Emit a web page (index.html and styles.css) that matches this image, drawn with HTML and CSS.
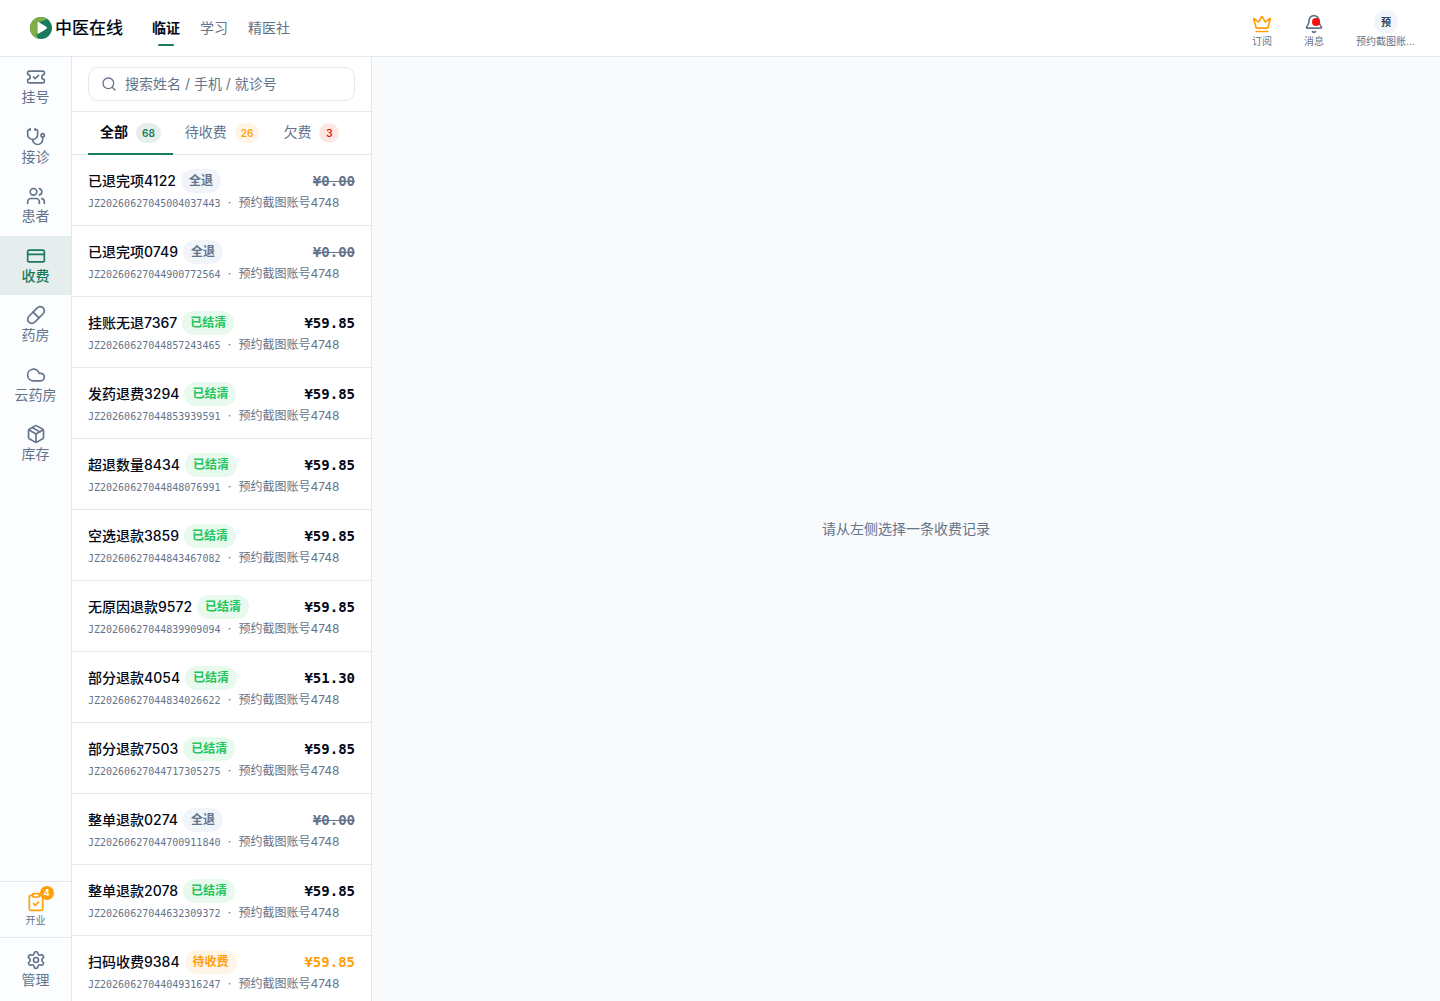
FILE: index.html
```html
<!DOCTYPE html>
<html lang="zh-CN">
<head>
<meta charset="utf-8">
<meta name="viewport" content="width=device-width, initial-scale=1">
<title>收费 - 中医在线</title>
<link rel="stylesheet" href="styles.css">
</head>
<body>
<div class="app">
  <header class="topbar">
    <a class="brand" href="#">
      <svg class="brand-mark" viewBox="0 0 22 22" aria-hidden="true">
        <circle cx="11" cy="11" r="11" fill="#1a7a5e"/>
        <path d="M17 1.800A11 11 0 1 0 8 21.600C6.500 19 6.500 17 7.500 14V7C10 3.500 14.500 4.500 17 1.800Z" fill="#7fae45"/>
        <path d="M7.500 6C7.500 5 8.400 4.900 9.300 5.400L16.300 9.800C17.200 10.400 17.200 11.200 16.300 11.800C13.500 13.800 11 15.500 7.500 17.200Z" fill="#fff"/>
      </svg>
      <span>中医在线</span>
    </a>
    <nav class="topnav">
      <a class="topnav-link is-active" href="#">临证</a>
      <a class="topnav-link" href="#">学习</a>
      <a class="topnav-link" href="#">精医社</a>
    </nav>
    <div class="tools">
      <button class="tool" type="button">
        <svg class="icon icon-amber" viewBox="0 0 24 24"><path d="M11.562 3.266a.5.5 0 0 1 .876 0L15.390 8.870a1 1 0 0 0 1.516.294L21.183 5.500a.5.5 0 0 1 .798.519l-2.834 10.246a1 1 0 0 1-.956.734H5.810a1 1 0 0 1-.957-.734L2.020 6.020a.5.5 0 0 1 .798-.519l4.276 3.664a1 1 0 0 0 1.516-.294z"/><path d="M5 21h14"/></svg>
        <span>订阅</span>
      </button>
      <button class="tool" type="button">
        <span class="icon-wrap">
          <svg class="icon" viewBox="0 0 24 24"><path d="M10.268 21a2 2 0 0 0 3.464 0"/><path d="M3.262 15.326A1 1 0 0 0 4 17h16a1 1 0 0 0 .740-1.673C19.410 13.956 18 12.499 18 8A6 6 0 0 0 6 8c0 4.499-1.411 5.956-2.738 7.326"/></svg>
          <i class="dot"></i>
        </span>
        <span>消息</span>
      </button>
      <button class="tool tool-user" type="button">
        <span class="avatar">预</span>
        <span class="user-name">预约截图账号4748</span>
      </button>
    </div>
  </header>

  <div class="body">
    <aside class="sidebar">
      <nav class="side-main">
        <a class="side-link" href="#"><svg class="icon" viewBox="0 0 24 24"><path d="M2 9a3 3 0 1 1 0 6v2a2 2 0 0 0 2 2h16a2 2 0 0 0 2-2v-2a3 3 0 1 1 0-6V7a2 2 0 0 0-2-2H4a2 2 0 0 0-2 2Z"/><path d="m9 12 2 2 4-4"/></svg><span>挂号</span></a>
        <a class="side-link" href="#"><svg class="icon" viewBox="0 0 24 24"><path d="M11 2v2"/><path d="M5 2v2"/><path d="M5 3H4a2 2 0 0 0-2 2v4a6 6 0 0 0 12 0V5a2 2 0 0 0-2-2h-1"/><path d="M8 15a6 6 0 0 0 12 0v-3"/><circle cx="20" cy="10" r="2"/></svg><span>接诊</span></a>
        <a class="side-link" href="#"><svg class="icon" viewBox="0 0 24 24"><path d="M16 21v-2a4 4 0 0 0-4-4H6a4 4 0 0 0-4 4v2"/><circle cx="9" cy="7" r="4"/><path d="M22 21v-2a4 4 0 0 0-3-3.870"/><path d="M16 3.130a4 4 0 0 1 0 7.750"/></svg><span>患者</span></a>
        <a class="side-link is-active" href="#" aria-current="page"><svg class="icon" viewBox="0 0 24 24"><rect x="2" y="5" width="20" height="14" rx="2"/><path d="M2 10h20"/></svg><span>收费</span></a>
        <a class="side-link" href="#"><svg class="icon" viewBox="0 0 24 24"><path d="m10.500 20.500 10-10a4.950 4.950 0 1 0-7-7l-10 10a4.950 4.950 0 1 0 7 7Z"/><path d="m8.500 8.500 7 7"/></svg><span>药房</span></a>
        <a class="side-link" href="#"><svg class="icon" viewBox="0 0 24 24"><path d="M17.500 19H9a7 7 0 1 1 6.710-9h1.790a4.500 4.500 0 1 1 0 9Z"/></svg><span>云药房</span></a>
        <a class="side-link" href="#"><svg class="icon" viewBox="0 0 24 24"><path d="M11 21.730a2 2 0 0 0 2 0l7-4A2 2 0 0 0 21 16V8a2 2 0 0 0-1-1.730l-7-4a2 2 0 0 0-2 0l-7 4A2 2 0 0 0 3 8v8a2 2 0 0 0 1 1.730z"/><path d="M12 22V12"/><path d="M3.290 7 12 12l8.710-5"/><path d="m7.500 4.270 9 5.150"/></svg><span>库存</span></a>
      </nav>
      <div class="side-setup">
        <a class="setup-link" href="#">
          <span class="icon-wrap">
            <svg class="icon icon-amber" viewBox="0 0 24 24"><rect x="8" y="2" width="8" height="4" rx="1"/><path d="M16 4h2a2 2 0 0 1 2 2v14a2 2 0 0 1-2 2H6a2 2 0 0 1-2-2V6a2 2 0 0 1 2-2h2"/><path d="m9 14 2 2 4-4"/></svg>
            <span class="setup-count">4</span>
          </span>
          <span>开业</span>
        </a>
      </div>
      <div class="side-admin">
        <a class="side-link" href="#"><svg class="icon" viewBox="0 0 24 24"><path d="M9.671 4.136a2.340 2.340 0 0 1 4.659 0 2.340 2.340 0 0 0 3.319 1.915 2.340 2.340 0 0 1 2.330 4.033 2.340 2.340 0 0 0 0 3.831 2.340 2.340 0 0 1-2.330 4.033 2.340 2.340 0 0 0-3.319 1.915 2.340 2.340 0 0 1-4.659 0 2.340 2.340 0 0 0-3.320-1.915 2.340 2.340 0 0 1-2.330-4.033 2.340 2.340 0 0 0 0-3.831A2.340 2.340 0 0 1 6.350 6.051a2.340 2.340 0 0 0 3.319-1.915"/><circle cx="12" cy="12" r="3"/></svg><span>管理</span></a>
      </div>
    </aside>

    <section class="records">
      <div class="search">
        <label class="search-box">
          <svg class="icon icon-small" viewBox="0 0 24 24"><circle cx="11" cy="11" r="8"/><path d="m21 21-4.300-4.300"/></svg>
          <input type="search" aria-label="搜索收费记录" placeholder="搜索姓名 / 手机 / 就诊号">
        </label>
      </div>
      <div class="tabs" role="tablist">
        <button class="tab is-active" type="button" role="tab" aria-selected="true"><span>全部</span><span class="count count-green">68</span></button>
        <button class="tab" type="button" role="tab" aria-selected="false"><span>待收费</span><span class="count count-amber">26</span></button>
        <button class="tab" type="button" role="tab" aria-selected="false"><span>欠费</span><span class="count count-red">3</span></button>
      </div>
      <ul class="list">
        <li class="row"><div class="row-head"><span class="name">已退完项4122</span><span class="badge">全退</span><span class="price is-void">¥0.00</span></div><div class="meta"><span class="code">JZ20260627045004037443</span><span class="sep">·</span><span>预约截图账号4748</span></div></li>
        <li class="row"><div class="row-head"><span class="name">已退完项0749</span><span class="badge">全退</span><span class="price is-void">¥0.00</span></div><div class="meta"><span class="code">JZ20260627044900772564</span><span class="sep">·</span><span>预约截图账号4748</span></div></li>
        <li class="row"><div class="row-head"><span class="name">挂账无退7367</span><span class="badge badge-green">已结清</span><span class="price">¥59.85</span></div><div class="meta"><span class="code">JZ20260627044857243465</span><span class="sep">·</span><span>预约截图账号4748</span></div></li>
        <li class="row"><div class="row-head"><span class="name">发药退费3294</span><span class="badge badge-green">已结清</span><span class="price">¥59.85</span></div><div class="meta"><span class="code">JZ20260627044853939591</span><span class="sep">·</span><span>预约截图账号4748</span></div></li>
        <li class="row"><div class="row-head"><span class="name">超退数量8434</span><span class="badge badge-green">已结清</span><span class="price">¥59.85</span></div><div class="meta"><span class="code">JZ20260627044848076991</span><span class="sep">·</span><span>预约截图账号4748</span></div></li>
        <li class="row"><div class="row-head"><span class="name">空选退款3859</span><span class="badge badge-green">已结清</span><span class="price">¥59.85</span></div><div class="meta"><span class="code">JZ20260627044843467082</span><span class="sep">·</span><span>预约截图账号4748</span></div></li>
        <li class="row"><div class="row-head"><span class="name">无原因退款9572</span><span class="badge badge-green">已结清</span><span class="price">¥59.85</span></div><div class="meta"><span class="code">JZ20260627044839909094</span><span class="sep">·</span><span>预约截图账号4748</span></div></li>
        <li class="row"><div class="row-head"><span class="name">部分退款4054</span><span class="badge badge-green">已结清</span><span class="price">¥51.30</span></div><div class="meta"><span class="code">JZ20260627044834026622</span><span class="sep">·</span><span>预约截图账号4748</span></div></li>
        <li class="row"><div class="row-head"><span class="name">部分退款7503</span><span class="badge badge-green">已结清</span><span class="price">¥59.85</span></div><div class="meta"><span class="code">JZ20260627044717305275</span><span class="sep">·</span><span>预约截图账号4748</span></div></li>
        <li class="row"><div class="row-head"><span class="name">整单退款0274</span><span class="badge">全退</span><span class="price is-void">¥0.00</span></div><div class="meta"><span class="code">JZ20260627044700911840</span><span class="sep">·</span><span>预约截图账号4748</span></div></li>
        <li class="row"><div class="row-head"><span class="name">整单退款2078</span><span class="badge badge-green">已结清</span><span class="price">¥59.85</span></div><div class="meta"><span class="code">JZ20260627044632309372</span><span class="sep">·</span><span>预约截图账号4748</span></div></li>
        <li class="row"><div class="row-head"><span class="name">扫码收费9384</span><span class="badge badge-amber">待收费</span><span class="price is-due">¥59.85</span></div><div class="meta"><span class="code">JZ20260627044049316247</span><span class="sep">·</span><span>预约截图账号4748</span></div></li>
      </ul>
    </section>

    <main class="detail">
      <p>请从左侧选择一条收费记录</p>
    </main>
  </div>
</div>
</body>
</html>
```
FILE: styles.css
```css
:root {
  --ink: #020817;
  --muted: #64748b;
  --line: #e2e8f0;
  --green: #1a7a5e;
  --amber: #ff9f0a;
  --red: #f01010;
  --mono: "DejaVu Sans Mono", "Noto Sans CJK SC", monospace;
}

* { box-sizing: border-box; }

body {
  margin: 0;
  color: var(--ink);
  font-family: Inter, "Noto Sans CJK SC", sans-serif;
  font-size: 14px;
  line-height: 20px;
}

a { color: inherit; text-decoration: none; }
p { margin: 0; }

button {
  padding: 0;
  border: 0;
  background: none;
  color: inherit;
  font: inherit;
  cursor: pointer;
}

.app {
  display: flex;
  flex-direction: column;
  height: 100vh;
  overflow: hidden;
}

.icon {
  display: block;
  flex: none;
  width: 20px;
  height: 20px;
  fill: none;
  stroke: currentColor;
  stroke-width: 2;
  stroke-linecap: round;
  stroke-linejoin: round;
}
.icon-small { width: 16px; height: 16px; }
.icon-amber { color: var(--amber); }
.icon-wrap { position: relative; }

/* Top bar */
.topbar {
  display: flex;
  flex: none;
  align-items: center;
  height: 57px;
  padding: 0 24px 0 30px;
  border-bottom: 1px solid var(--line);
  background: #fff;
}
.brand {
  display: flex;
  align-items: center;
  gap: 3px;
  font-size: 17px;
  font-weight: 500;
}
.brand-mark { width: 22px; height: 22px; }
.topnav {
  display: flex;
  gap: 20px;
  margin-left: 29px;
  color: var(--muted);
}
.topnav-link { position: relative; }
.topnav-link.is-active { color: var(--ink); font-weight: 700; }
.topnav-link.is-active::after {
  content: "";
  position: absolute;
  bottom: -8px;
  left: 6px;
  right: 6px;
  height: 2px;
  border-radius: 1px;
  background: var(--green);
}
.tools {
  display: flex;
  align-items: flex-end;
  gap: 32px;
  margin-left: auto;
  padding-top: 2px;
  color: var(--muted);
  font-size: 10px;
  line-height: 14px;
}
.tool {
  display: flex;
  flex-direction: column;
  align-items: center;
}
.tool > .icon, .tool > .icon-wrap { margin-bottom: 0; }
.dot {
  position: absolute;
  top: 4px;
  right: 4px;
  width: 8px;
  height: 8px;
  border-radius: 50%;
  background: var(--red);
}
.avatar {
  width: 24px;
  height: 24px;
  border-radius: 50%;
  background: #f1f5f9;
  color: #334155;
  font-weight: 700;
  line-height: 24px;
}
.user-name {
  width: 60px;
  overflow: hidden;
  text-overflow: ellipsis;
  white-space: nowrap;
}

/* Side navigation */
.body { display: flex; flex: 1; min-height: 0; }
.sidebar {
  display: flex;
  flex: none;
  flex-direction: column;
  width: 72px;
  border-right: 1px solid var(--line);
  background: #fbfdff;
  color: var(--muted);
}
.side-main { flex: 1; }
.side-link {
  display: flex;
  flex-direction: column;
  align-items: center;
  gap: 1px;
  padding: 10px 0 11px;
  line-height: 1.25;
}
.side-link.is-active {
  background: #e5eeec;
  color: var(--green);
  font-weight: 500;
}
.side-setup, .side-admin { border-top: 1px solid var(--line); }
.side-admin { padding: 2px 0; }
.setup-link {
  display: flex;
  flex-direction: column;
  align-items: center;
  gap: 1px;
  padding: 10px 0;
  font-size: 10px;
  line-height: 14px;
}
.setup-count {
  position: absolute;
  top: -6px;
  right: -8px;
  width: 14px;
  height: 14px;
  border-radius: 50%;
  background: var(--amber);
  color: #fff;
  font-size: 9px;
  font-weight: 700;
  line-height: 14px;
  text-align: center;
}

/* Record list */
.records {
  flex: none;
  width: 300px;
  overflow: hidden;
  border-right: 1px solid var(--line);
  background: #fff;
}
.search { padding: 10px 16px; border-bottom: 1px solid var(--line); }
.search-box {
  display: flex;
  align-items: center;
  gap: 8px;
  height: 34px;
  padding: 0 12px;
  border: 1px solid var(--line);
  border-radius: 10px;
  color: var(--muted);
}
.search-box input {
  flex: 1;
  min-width: 0;
  padding: 0;
  border: 0;
  outline: 0;
  background: none;
  color: var(--ink);
  font: inherit;
}
.search-box input::placeholder { color: var(--muted); opacity: 1; }
.tabs {
  display: flex;
  height: 43px;
  padding: 0 16px;
  border-bottom: 1px solid var(--line);
}
.tab {
  display: flex;
  flex: none;
  align-items: center;
  gap: 8px;
  height: 43px;
  padding: 0 12px;
  border-bottom: 2px solid transparent;
  color: var(--muted);
  line-height: 18px;
}
.tab > span:first-child { padding-bottom: 2px; }
.tab.is-active {
  border-color: var(--green);
  color: var(--ink);
  font-weight: 700;
}
.count {
  min-width: 20px;
  padding: 0 6px;
  border-radius: 10px;
  font-size: 10px;
  font-weight: 600;
  line-height: 20px;
}
.count-green { background: #e5eeec; color: var(--green); }
.count-amber { background: #fff5e6; color: var(--amber); }
.count-red { background: #fde7e3; color: var(--red); }

.list { margin: 0; padding: 0; list-style: none; }
.row {
  padding: 14px 16px 13px;
  border-bottom: 1px solid var(--line);
}
.row-head { display: flex; align-items: center; gap: 5px; }
.name { font-weight: 500; }
.badge {
  padding: 0 8px;
  border-radius: 12px;
  background: #f1f5f9;
  color: var(--muted);
  font-size: 12px;
  font-weight: 700;
  line-height: 24px;
}
.badge-green { background: #e8f9ee; color: #22c55e; }
.badge-amber { background: #fff5e6; color: var(--amber); }
.price {
  margin-left: auto;
  font-family: var(--mono);
  font-weight: 700;
}
.price.is-void { color: var(--muted); text-decoration: line-through; }
.price.is-due { color: var(--amber); }
.meta {
  display: flex;
  align-items: baseline;
  height: 18px;
  margin-top: 1px;
  color: var(--muted);
  font-size: 12px;
  line-height: 18px;
}
.code { font-family: var(--mono); font-size: 10px; }
.sep { width: 18px; text-align: center; }

/* Detail pane */
.detail {
  display: flex;
  flex: 1;
  align-items: center;
  justify-content: center;
  min-width: 0;
  background: #f8fafc;
  color: var(--muted);
}
```
